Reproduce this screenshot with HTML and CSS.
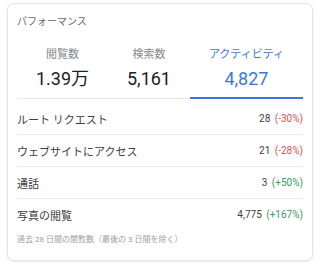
FILE: index.html
```html
<!DOCTYPE html>
<html lang="ja">

    <head>
        <meta charset="UTF-8">
        <meta name="viewport" content="width=device-width, initial-scale=1.0">
        <title>パフォーマンス</title>

        <link rel="stylesheet" href="styles.css">
    </head>

    <body>

        <div class="card">
            <h2 class="title">パフォーマンス</h2>

            <div class="tabs">
                <div class="tab">
                    <div class="tabLabel">閲覧数</div>
                    <div class="tabValue">1.39万</div>
                </div>
                <div class="tab">
                    <div class="tabLabel">検索数</div>
                    <div class="tabValue">5,161</div>
                </div>
                <div class="tab active">
                    <div class="tabLabel">アクティビティ</div>
                    <div class="tabValue">4,827</div>
                </div>
            </div>

            <div class="rows">
                <div class="row">
                    <span class="rowLabel">ルート リクエスト</span>
                    <span class="rowValue">28 <span class="down">(-30%)</span></span>
                </div>
                <div class="row">
                    <span class="rowLabel">ウェブサイトにアクセス</span>
                    <span class="rowValue">21 <span class="down">(-28%)</span></span>
                </div>
                <div class="row">
                    <span class="rowLabel">通話</span>
                    <span class="rowValue">3 <span class="up">(+50%)</span></span>
                </div>
                <div class="row">
                    <span class="rowLabel">写真の閲覧</span>
                    <span class="rowValue">4,775 <span class="up">(+167%)</span></span>
                </div>
            </div>

            <p class="note">過去 28 日間の閲覧数（最後の 3 日間を除く）</p>
        </div>

    </body>

</html>
```

FILE: styles.css
```css
body {
    font-family: Roboto, "Noto Sans CJK JP", sans-serif;
    background-color: #fff;
    margin: 0;
    padding: 3px 7px;
}

.card {
    width: 306px;
    box-sizing: border-box;
    border: 1px solid #e3e3e3;
    border-radius: 7px;
    box-shadow: 0 1px 2px rgba(0, 0, 0, 0.08);
    padding: 11px 9px 14px 9px;
}

.title {
    margin: 0;
    font-size: 10px;
    font-weight: normal;
    line-height: 14px;
    color: #666a6e;
}

.tabs {
    display: flex;
    margin-top: 18px;
    border-bottom: 1px solid #e6e6e6;
}

.tab {
    flex: 1 1 auto;
    display: flex;
    flex-direction: column;
    align-items: center;
    padding-bottom: 6px;
    border-bottom: 2px solid transparent;
    margin-bottom: -1px;
}

.tabLabel {
    font-size: 11px;
    line-height: 16px;
    color: #85898d;
}

.tabValue {
    font-size: 18px;
    line-height: 24px;
    margin-top: 4px;
    color: #202124;
}

.tab.active {
    border-bottom-color: #3b78d8;
}

.tab.active .tabLabel,
.tab.active .tabValue {
    color: #3b78d8;
}

.rows {
    padding-top: 4px;
}

.row {
    display: flex;
    justify-content: space-between;
    align-items: center;
    height: 31px;
    border-bottom: 1px solid #ebebeb;
    font-size: 11px;
}

.row:last-child {
    border-bottom: none;
}

.rowLabel {
    color: #3c4043;
}

.rowValue {
    font-size: 10px;
    color: #3c4043;
}

.down {
    color: #d9534f;
    margin-left: 2px;
}

.up {
    color: #3c9a5f;
    margin-left: 2px;
}

.note {
    margin: 4px 0 0 0;
    font-size: 8px;
    line-height: 12px;
    color: #9aa0a6;
}
```
